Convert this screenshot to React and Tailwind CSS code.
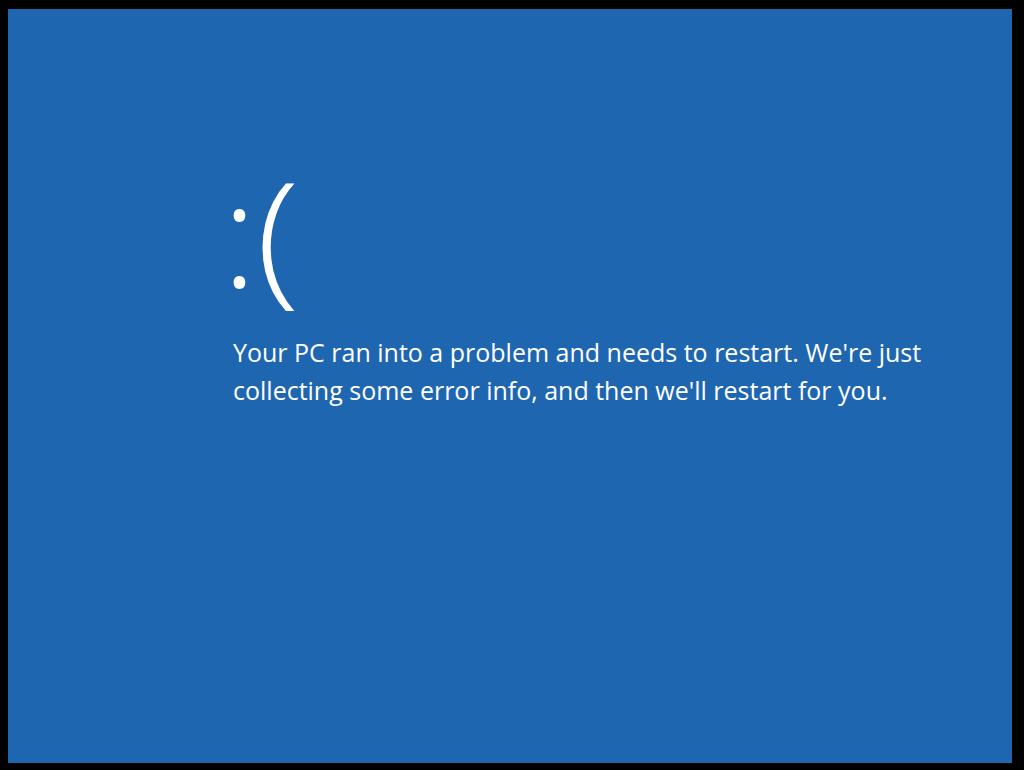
export default function App() {
  return (
    <div className="h-[770px] w-[1024px] bg-black pt-[9px] pl-[8px]">
      <div
        className="flex h-[754px] w-[1004px] flex-col bg-[#1f66b1] pl-[222px] pt-[150px] text-white"
        style={{ fontFamily: '"Open Sans", "Noto Sans", sans-serif' }}
      >
        {/* Sad face */}
        <div className="-ml-[8px] flex text-[146px] leading-none font-light">
          <span>:</span>
          <span className="ml-[1px] scale-x-110">(</span>
        </div>

        {/* Message */}
        <p className="mt-[28px] pl-[3px] text-[25px] leading-[38px] font-normal">
          Your PC ran into a problem and needs to restart. We're just
          <br />
          collecting some error info, and then we'll restart for you.
        </p>
      </div>
    </div>
  )
}
